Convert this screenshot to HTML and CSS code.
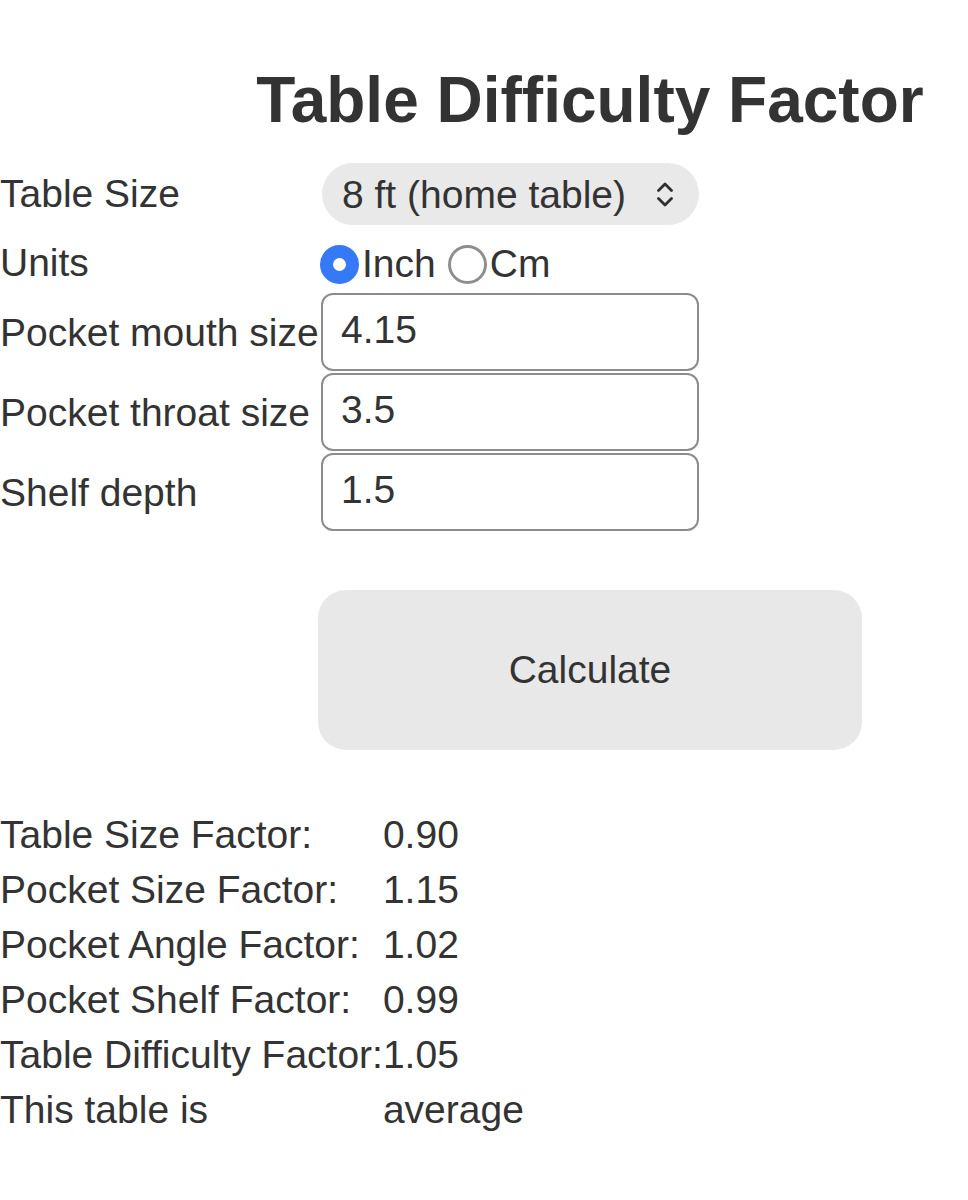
FILE: index.html
```html
<!DOCTYPE html>
<html lang="en">
<head>
<meta charset="utf-8">
<title>Table Difficulty Factor</title>
<link rel="stylesheet" href="styles.css">
</head>
<body>
<main class="page">
  <form class="calc">
    <h1 class="title">Table Difficulty Factor</h1>

    <label class="label" for="size">Table Size</label>
    <div class="select-wrap">
      <select id="size" class="select">
        <option>8 ft (home table)</option>
        <option>9 ft (pro table)</option>
        <option>7 ft (bar table)</option>
      </select>
      <svg class="chevrons" width="16" height="25" viewBox="0 0 16 25" aria-hidden="true">
        <path d="M1.5 8.5 L8 2 L14.5 8.5 M1.5 16.5 L8 23 L14.5 16.5" fill="none" stroke="#2f2f2f" stroke-width="2.8" stroke-linecap="round" stroke-linejoin="round"/>
      </svg>
    </div>

    <span class="label label--units">Units</span>
    <div class="radios">
      <label class="radio"><input type="radio" name="units" checked><span>Inch</span></label>
      <label class="radio"><input type="radio" name="units"><span>Cm</span></label>
    </div>

    <label class="label" for="mouth">Pocket mouth size</label>
    <div class="field"><input id="mouth" class="input" type="text" value="4.15"></div>

    <label class="label" for="throat">Pocket throat size</label>
    <div class="field"><input id="throat" class="input" type="text" value="3.5"></div>

    <label class="label" for="shelf">Shelf depth</label>
    <div class="field"><input id="shelf" class="input" type="text" value="1.5"></div>

    <button type="button" class="button">Calculate</button>
  </form>

  <dl class="results">
    <dt>Table Size Factor:</dt><dd>0.90</dd>
    <dt>Pocket Size Factor:</dt><dd>1.15</dd>
    <dt>Pocket Angle Factor:</dt><dd>1.02</dd>
    <dt>Pocket Shelf Factor:</dt><dd>0.99</dd>
    <dt>Table Difficulty Factor:</dt><dd>1.05</dd>
    <dt>This table is</dt><dd>average</dd>
  </dl>
</main>
</body>
</html>
```

FILE: styles.css
```css
html, body {
  margin: 0;
  padding: 0;
  background: #ffffff;
}

body {
  font-family: "Liberation Sans", Arial, Helvetica, sans-serif;
  font-size: 39px;
  color: #333333;
}

.page {
  width: 968px;
}

.calc {
  display: grid;
  grid-template-columns: 318px 544px;
  align-items: center;
}

.title {
  grid-column: 2;
  margin: 63px -106px 26px;
  font-size: 64px;
  line-height: 74px;
  font-weight: bold;
  text-align: center;
  white-space: nowrap;
  color: #333333;
}

.label {
  grid-column: 1;
  line-height: 44px;
  white-space: nowrap;
}

.label--units {
  align-self: start;
  padding-top: 16px;
}

.select-wrap {
  grid-column: 2;
  position: relative;
  width: 377px;
  height: 62px;
  margin-left: 4px;
}

.select {
  -webkit-appearance: none;
  appearance: none;
  width: 100%;
  height: 100%;
  margin: 0;
  border: none;
  border-radius: 31px;
  background: #e9e9e9;
  padding: 0 0 0 20px;
  font-family: inherit;
  font-size: 39px;
  color: #333333;
  outline: none;
}

.chevrons {
  position: absolute;
  top: 19px;
  left: 335px;
  pointer-events: none;
}

.radios {
  grid-column: 2;
  display: flex;
  align-items: center;
  gap: 12px;
  height: 68px;
  padding-top: 10px;
  box-sizing: border-box;
  margin-left: 2px;
}

.radio {
  display: flex;
  align-items: center;
  gap: 3px;
  line-height: 44px;
}

.radio input {
  -webkit-appearance: none;
  appearance: none;
  box-sizing: border-box;
  width: 39px;
  height: 39px;
  margin: 0;
  border-radius: 50%;
  border: 3px solid #8e8e8e;
  background: #ffffff;
}

.radio input:checked {
  border: 13px solid #3579f6;
}

.field {
  grid-column: 2;
  height: 80px;
}

.input {
  box-sizing: border-box;
  width: 378px;
  height: 78px;
  margin: 0 0 0 3px;
  border: 2.5px solid #8c8c8c;
  border-radius: 12px;
  padding: 0 0 4px 18px;
  font-family: inherit;
  font-size: 39px;
  color: #333333;
  background: #ffffff;
  outline: none;
}

.button {
  grid-column: 2;
  width: 544px;
  height: 160px;
  margin-top: 57px;
  border: none;
  border-radius: 28px;
  background: #e8e8e8;
  font-family: inherit;
  font-size: 39px;
  color: #333333;
  padding: 0;
}

.results {
  display: grid;
  grid-template-columns: max-content auto;
  margin: 57px 0 0;
  line-height: 55px;
}

.results dt,
.results dd {
  margin: 0;
}
```
